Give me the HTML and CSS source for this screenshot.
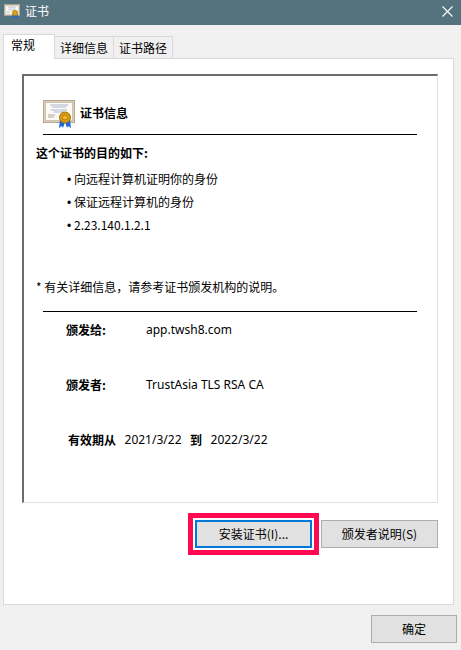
FILE: index.html
```html
<!DOCTYPE html>
<html lang="zh-CN">
<head>
  <meta charset="UTF-8">
  <title>证书</title>
  <link rel="stylesheet" href="styles.css">
</head>
<body>

<svg class="defs" width="0" height="0">
  <symbol id="cert" viewBox="0 0 32 29">
    <rect x="0.5" y="0.5" width="31" height="22" fill="#d8cdb8" stroke="#b5a88f"/>
    <rect x="2.5" y="2.5" width="27" height="18" fill="#fbfaf6" stroke="#cfc4ae"/>
    <path d="M7 5h18M9 7h14M8 10h16M11 12h10" stroke="#aab4cc" fill="none"/>
    <path d="M5 15h7M5 17h6" stroke="#a9a9a0" fill="none"/>
    <path d="M17 20l-1 8 3-2 1 2 2-6 2 6 1-2 3 2-1-8z" fill="#1f68d8"/>
    <circle cx="22" cy="17.5" r="5.5" fill="#d99a14" stroke="#a87208"/>
    <circle cx="22" cy="17.5" r="2.5" fill="#eeb92f" stroke="#b98210"/>
  </symbol>
</svg>

<div class="titlebar">
  <svg class="title-icon"><use href="#cert"/></svg>
  <span class="title-text">证书</span>
  <svg class="close" viewBox="0 0 11 11">
    <path d="M0.5 0.5l10 10M10.5 0.5l-10 10" stroke="#fff" stroke-width="1.1" fill="none"/>
  </svg>
</div>

<div class="tabs">
  <div class="tab active">常规</div>
  <div class="tab">详细信息</div>
  <div class="tab">证书路径</div>
</div>

<div class="panel">
  <div class="cert-box">
    <div class="cert-head">
      <svg class="cert-icon"><use href="#cert"/></svg>
      <strong>证书信息</strong>
    </div>
    <div class="purpose-title">这个证书的目的如下:</div>
    <ul class="purposes">
      <li>向远程计算机证明你的身份</li>
      <li>保证远程计算机的身份</li>
      <li>2.23.140.1.2.1</li>
    </ul>
    <div class="note">* 有关详细信息&#xFF0C;请参考证书颁发机构的说明。</div>
    <div class="details">
      <div class="row">
        <strong class="label">颁发给:</strong>
        <span class="latin">app.twsh8.com</span>
      </div>
      <div class="row">
        <strong class="label">颁发者:</strong>
        <span class="latin">TrustAsia TLS RSA CA</span>
      </div>
      <div class="row dates">
        <strong>有效期从</strong>
        <span class="latin">2021/3/22</span>
        <strong>到</strong>
        <span class="latin">2022/3/22</span>
      </div>
    </div>
  </div>

  <div class="panel-buttons">
    <button class="btn focused">安装证书(I)...</button>
    <button class="btn">颁发者说明(S)</button>
  </div>
</div>

<div class="footer">
  <button class="btn ok">确定</button>
</div>

</body>
</html>
```

FILE: styles.css
```css
html, body {
  height: 100%;
}
body {
  margin: 0;
  height: 650px;
  overflow: hidden;
  background-color: #f0f0f0;
  color: #000;
  font-family: "Noto Sans CJK SC", "Noto Sans", sans-serif;
  font-size: 12px;
  line-height: 16px;
}
.defs {
  position: absolute;
}
.titlebar {
  display: flex;
  align-items: center;
  height: 25px;
  padding: 0 8px 3px 4px;
  box-sizing: border-box;
  background-color: #55727f;
  color: #fff;
}
.title-icon {
  width: 16px;
  height: 15px;
}
.title-text {
  margin-left: 5px;
}
.close {
  width: 11px;
  height: 11px;
  margin-left: auto;
}
.tabs {
  display: flex;
  align-items: flex-end;
  height: 33px;
  padding-left: 3px;
  box-sizing: border-box;
}
.tab {
  height: 22px;
  padding: 3px 5px 0;
  box-sizing: border-box;
  margin-left: -1px;
  border: 1px solid #d9d9d9;
  border-bottom: 0;
  background-color: #f0f0f0;
}
.tab.active {
  height: 25px;
  width: 52px;
  margin-left: 0;
  margin-bottom: -1px;
  padding: 2px 0 0 7px;
  background-color: #fff;
  position: relative;
}
.panel {
  height: 547px;
  margin: 0 7px 0 3px;
  padding: 15px 15px 0 18px;
  box-sizing: border-box;
  background-color: #fff;
  border: 1px solid #d9d9d9;
}
.cert-box {
  height: 429px;
  box-sizing: border-box;
  border-top: 2px solid #6d6d6d;
  border-left: 2px solid #6d6d6d;
  border-right: 1px solid #e3e3e3;
  border-bottom: 1px solid #e3e3e3;
  padding: 0 20px 0 19px;
}
.cert-head {
  display: flex;
  align-items: center;
  height: 59px;
  padding-top: 24px;
  box-sizing: border-box;
  border-bottom: 1px solid #000;
}
.cert-head strong {
  margin: 0 0 9px 5px;
  font-size: 12px;
}
.cert-icon {
  width: 32px;
  height: 29px;
  margin-bottom: 6px;
}
.purpose-title {
  margin: 10px 0 0 -7px;
  font-weight: 700;
}
.purposes {
  list-style: none;
  margin: 10px 0 0;
  padding: 0 0 0 24px;
}
.purposes li {
  height: 23px;
  line-height: 16px;
}
.purposes li::before {
  content: "\2022";
  display: inline-block;
  width: 7px;
  font-family: "Liberation Sans", sans-serif;
}
.note {
  margin: 39px 0 0 -7px;
  padding-bottom: 16px;
}
.details {
  border-top: 1px solid #000;
}
.row {
  display: flex;
  height: 55px;
  padding: 10px 0 0 23px;
  box-sizing: border-box;
}
.label {
  width: 80px;
}
.latin {
  font-family: "Noto Sans", sans-serif;
}
.dates {
  gap: 8.5px;
  padding-left: 25px;
}
.panel-buttons {
  display: flex;
  justify-content: flex-end;
  gap: 9px;
  margin-top: 17px;
}
.btn {
  width: 117px;
  height: 28px;
  padding: 0;
  background-color: #e1e1e1;
  border: 1px solid #adadad;
  font: inherit;
  color: #000;
}
.btn.focused {
  border: 2px solid #0078d7;
  box-shadow: 0 0 0 2px #fff, 0 0 0 7px #ff0a50;
  position: relative;
}
.footer {
  display: flex;
  justify-content: flex-end;
  padding: 10px 4px 0 0;
}
.btn.ok {
  width: 86px;
}
```
